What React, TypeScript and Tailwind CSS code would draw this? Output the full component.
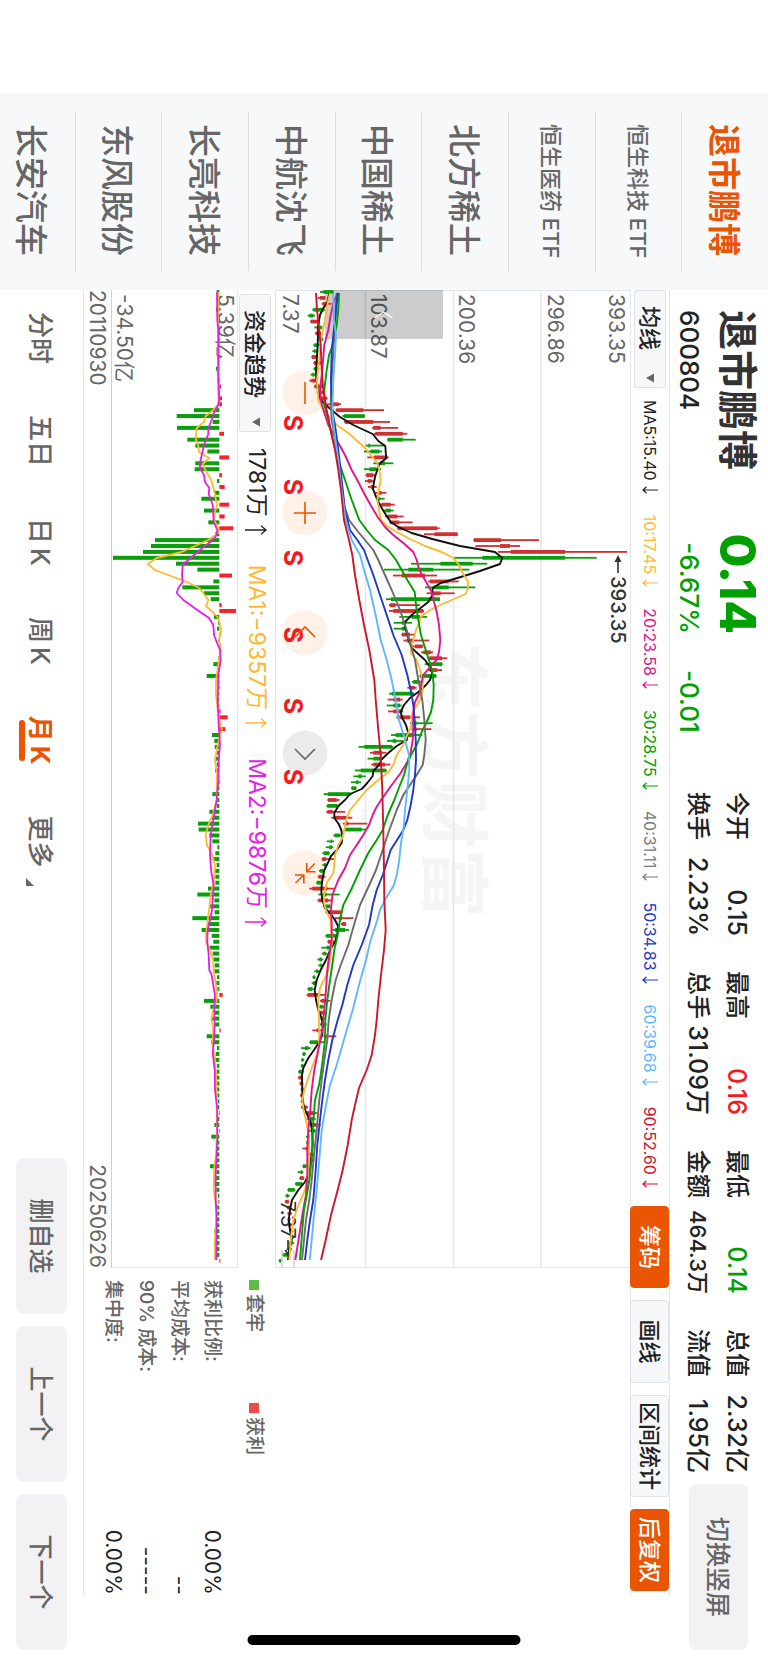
type Level = [number, number];

interface Line {
  color: string;
  points: Level[];
}

const FIRST_X = 292;
const STEP = 5.907;

const watchlist = [
  { name: "退市鹏博", active: true },
  { name: "恒生科技 ETF", small: true },
  { name: "恒生医药 ETF", small: true },
  { name: "北方稀土" },
  { name: "中国稀土" },
  { name: "中航沈飞" },
  { name: "长亮科技" },
  { name: "东风股份" },
  { name: "长安汽车" },
];

const stats = [
  [
    { label: "今开", value: "0.15" },
    { label: "换手", value: "2.23%" },
  ],
  [
    { label: "最高", value: "0.16", tone: "text-[#f5191e]" },
    { label: "总手", value: "31.09万" },
  ],
  [
    { label: "最低", value: "0.14", tone: "text-[#00a000]" },
    { label: "金额", value: "464.3万", small: true },
  ],
  [
    { label: "总值", value: "2.32亿" },
    { label: "流值", value: "1.95亿" },
  ],
];

const averages = [
  { text: "MA5:15.40", tone: "text-[#222222]" },
  { text: "10:17.45", tone: "text-[#fdb932]" },
  { text: "20:23.58", tone: "text-[#e5148c]" },
  { text: "30:28.75", tone: "text-[#00a000]" },
  { text: "40:31.11", tone: "text-[#7a7a7a]" },
  { text: "50:34.83", tone: "text-[#2038c8]" },
  { text: "60:39.68", tone: "text-[#5fb8fa]" },
  { text: "90:52.60", tone: "text-[#d0142c]" },
];

const costs = [
  { label: "获利比例:", value: "0.00%" },
  { label: "平均成本:", value: "--" },
  { label: "90% 成本:", value: "-----" },
  { label: "集中度:", value: "0.00%" },
];

// up(1)/down(0), low, body low, body high, high; three levels per drawn unit
const candles: [number, number, number, number, number][] = [
  [0, 150, 160, 190, 190], [1, 143, 150, 166, 166], [1, 155, 158, 172, 185], [0, 127, 130, 162, 165],
  [0, 113, 118, 130, 135], [1, 120, 122, 145, 145], [0, 133, 140, 155, 158], [1, 135, 137, 153, 153],
  [0, 145, 150, 158, 160], [0, 130, 133, 145, 150], [0, 127, 132, 137, 145], [1, 124, 126, 140, 140],
  [1, 130, 132, 152, 152], [0, 130, 133, 145, 148], [0, 122, 127, 133, 140], [1, 118, 124, 138, 138],
  [1, 132, 134, 158, 158], [1, 140, 144, 158, 160], [1, 150, 152, 170, 173], [1, 170, 188, 206, 213],
  [1, 197, 199, 280, 342], [0, 217, 222, 284, 284], [1, 222, 225, 310, 360], [1, 307, 309, 332, 384],
  [1, 312, 316, 398, 412], [0, 351, 353, 398, 437], [0, 287, 295, 300, 345], [0, 282, 302, 328, 336],
  [1, 292, 312, 352, 356], [0, 310, 330, 345, 370], [0, 282, 298, 320, 333], [1, 287, 289, 310, 315],
  [1, 285, 293, 305, 312], [1, 294, 302, 312, 320], [1, 315, 326, 334, 349], [0, 318, 325, 330, 344],
  [1, 330, 335, 362, 374], [0, 340, 347, 362, 371], [1, 345, 352, 382, 401], [1, 358, 360, 388, 428],
  [1, 381, 384, 501, 509], [1, 462, 493, 563, 563], [1, 610, 612, 693, 807], [1, 616, 690, 720, 750],
  [1, 684, 722, 885, 1071], [0, 553, 637, 885, 980], [0, 423, 511, 608, 652], [0, 342, 415, 490, 598],
  [1, 369, 395, 465, 501], [1, 474, 480, 536, 566], [0, 465, 490, 536, 616], [1, 470, 487, 512, 554],
  [0, 348, 363, 510, 510], [1, 357, 360, 376, 450], [1, 357, 370, 460, 462], [0, 388, 425, 450, 471],
  [0, 371, 395, 405, 426], [0, 371, 395, 403, 410], [1, 394, 396, 420, 435], [1, 400, 410, 430, 478],
  [1, 425, 435, 458, 460], [1, 453, 460, 482, 489], [1, 472, 478, 516, 532], [0, 464, 480, 516, 518],
  [1, 474, 480, 502, 516], [0, 448, 450, 498, 500], [0, 426, 430, 450, 455], [1, 412, 420, 434, 440],
  [0, 357, 365, 430, 432], [1, 353, 370, 390, 398], [0, 350, 370, 390, 395], [1, 354, 370, 395, 400],
  [1, 379, 382, 420, 450], [0, 420, 425, 440, 488], [1, 425, 430, 440, 484], [0, 363, 377, 426, 457],
  [0, 351, 368, 378, 400], [0, 266, 283, 366, 369], [1, 300, 310, 336, 349], [0, 293, 310, 335, 338],
  [1, 304, 310, 345, 361], [0, 255, 272, 348, 351], [0, 250, 265, 275, 287], [0, 243, 258, 265, 273],
  [0, 243, 245, 258, 260], [0, 161, 174, 241, 245], [1, 172, 174, 200, 209], [0, 169, 172, 202, 204],
  [1, 169, 172, 188, 225], [1, 184, 195, 230, 247], [1, 218, 225, 235, 292], [0, 222, 226, 275, 288],
  [0, 190, 194, 210, 215], [0, 170, 182, 186, 192], [0, 167, 178, 186, 190], [0, 157, 161, 177, 180],
  [1, 155, 157, 168, 192], [0, 157, 162, 168, 170], [0, 147, 150, 160, 163], [1, 143, 146, 160, 166],
  [0, 138, 141, 155, 158], [1, 118, 127, 172, 192], [0, 145, 160, 170, 209], [1, 142, 146, 175, 187],
  [0, 160, 165, 180, 185], [1, 166, 170, 213, 215], [1, 195, 208, 216, 250], [1, 213, 216, 228, 229],
  [0, 188, 195, 225, 237], [0, 166, 169, 198, 202], [1, 172, 174, 190, 195], [0, 154, 170, 180, 187],
  [0, 155, 160, 168, 172], [0, 142, 148, 156, 160], [0, 145, 149, 155, 160], [0, 133, 138, 145, 152],
  [0, 127, 130, 135, 137], [0, 125, 129, 138, 141], [0, 112, 115, 127, 131], [1, 110, 113, 146, 165],
  [1, 150, 154, 170, 181], [0, 145, 150, 160, 165], [1, 145, 150, 163, 170], [0, 150, 153, 160, 165],
  [0, 148, 152, 165, 170], [1, 127, 140, 148, 158], [1, 160, 166, 170, 199], [0, 118, 120, 145, 165],
  [0, 93, 105, 115, 122], [0, 97, 99, 105, 108], [0, 93, 95, 100, 103], [0, 92, 94, 100, 103],
  [0, 84, 87, 98, 100], [1, 84, 86, 96, 98], [1, 88, 90, 98, 100], [0, 92, 94, 100, 103],
  [1, 90, 92, 97, 100], [0, 92, 94, 99, 100], [1, 93, 95, 110, 114], [1, 105, 110, 135, 143],
  [0, 110, 118, 130, 137], [1, 118, 122, 140, 152], [0, 115, 125, 135, 142], [0, 108, 112, 118, 120],
  [0, 108, 110, 118, 120], [1, 97, 107, 112, 117], [1, 112, 115, 128, 132], [1, 120, 122, 130, 133],
  [0, 97, 99, 108, 112], [0, 83, 92, 97, 100], [1, 88, 90, 101, 103], [0, 75, 77, 97, 100],
  [0, 52, 54, 74, 76], [0, 46, 49, 55, 59], [1, 44, 46, 56, 58], [1, 50, 52, 60, 62],
  [1, 52, 56, 62, 66], [1, 52, 55, 60, 62], [1, 54, 56, 61, 64], [1, 58, 60, 66, 70],
  [0, 60, 64, 70, 73], [0, 55, 58, 68, 72], [0, 50, 54, 62, 66], [0, 38, 40, 52, 54],
  [0, 26, 28, 33, 34],
];

const priceLines: Line[] = [
  {
    color: "#111111",
    points: [
      [293, 178], [303, 172], [308, 160], [315, 150], [325, 145], [345, 143], [360, 140], [375, 138], [392, 145],
      [400, 152], [408, 178], [417, 210], [425, 250], [434, 308], [441, 325], [446, 346], [452, 347], [458, 349],
      [464, 328], [470, 322], [476, 316], [482, 312], [489, 309], [495, 316], [501, 324], [508, 335], [515, 348],
      [522, 362], [527, 385], [533, 425], [539, 487], [546, 570], [552, 675], [558, 697], [564, 690], [571, 630],
      [577, 572], [583, 512], [588, 488], [596, 486], [602, 475], [609, 448], [615, 425], [622, 405], [628, 405],
      [635, 413], [642, 418], [648, 425], [654, 445], [660, 465], [666, 478], [673, 487], [680, 480], [685, 468],
      [692, 445], [698, 420], [705, 402], [712, 392], [718, 397], [725, 408], [732, 414], [740, 410], [746, 380],
      [753, 355], [760, 333], [764, 330], [771, 310], [776, 308], [783, 292], [789, 275], [794, 240], [800, 225],
      [806, 205], [813, 193], [818, 193], [824, 206], [830, 214], [836, 217], [843, 215], [850, 200], [856, 183],
      [862, 175], [870, 163], [878, 158], [885, 155], [892, 154], [900, 157], [908, 165], [914, 182], [920, 195],
      [926, 204], [934, 202], [942, 195], [950, 180], [960, 168], [970, 152], [980, 140], [990, 134], [1000, 138],
      [1010, 145], [1018, 155], [1026, 158], [1035, 157], [1042, 148], [1050, 132], [1058, 115], [1068, 100],
      [1075, 96], [1090, 97], [1100, 98], [1107, 102], [1115, 112], [1122, 122], [1132, 127], [1145, 128],
      [1155, 125], [1165, 120], [1175, 115], [1182, 105], [1190, 85], [1200, 66], [1210, 60], [1220, 56],
      [1230, 60], [1240, 65], [1250, 58], [1260, 54],
    ],
  },
  {
    color: "#fdb932",
    points: [
      [293, 180], [305, 172], [320, 165], [340, 152], [360, 147], [380, 141], [400, 145], [410, 160], [416, 175],
      [425, 200], [433, 235], [441, 262], [448, 285], [456, 305], [463, 322], [472, 329], [480, 332], [490, 326],
      [500, 322], [510, 327], [520, 332], [526, 350], [532, 380], [539, 420], [546, 465], [552, 515], [558, 550],
      [564, 565], [571, 575], [577, 585], [582, 595], [588, 594], [594, 587], [600, 545], [605, 510], [610, 480],
      [617, 452], [623, 448], [630, 438], [638, 432], [645, 425], [653, 422], [660, 440], [670, 450], [680, 458],
      [690, 458], [700, 450], [708, 436], [716, 425], [725, 425], [735, 412], [745, 400], [755, 380], [765, 370],
      [772, 355], [780, 325], [790, 290], [800, 265], [810, 240], [820, 228], [828, 224], [837, 218], [845, 205],
      [855, 195], [865, 193], [873, 190], [882, 172], [892, 163], [903, 162], [912, 170], [920, 182], [930, 183],
      [940, 187], [950, 183], [960, 180], [970, 176], [978, 165], [988, 150], [1000, 145], [1020, 147],
      [1033, 148], [1045, 147], [1055, 140], [1068, 125], [1080, 113], [1090, 103], [1100, 97], [1110, 101],
      [1122, 109], [1135, 116], [1155, 118], [1175, 115], [1190, 105], [1200, 92], [1210, 80], [1220, 70],
      [1235, 64], [1250, 60], [1260, 58],
    ],
  },
  {
    color: "#e5148c",
    points: [
      [293, 205], [300, 193], [315, 182], [330, 175], [345, 163], [370, 157], [390, 150], [400, 152], [413, 163],
      [425, 175], [440, 200], [455, 225], [470, 245], [482, 265], [495, 285], [507, 305], [517, 323], [527, 345],
      [535, 370], [543, 400], [552, 430], [560, 440], [570, 448], [580, 465], [592, 485], [603, 493], [612, 500],
      [625, 507], [640, 511], [652, 507], [660, 500], [667, 480], [675, 460], [685, 453], [692, 450], [702, 435],
      [712, 430], [725, 430], [740, 428], [752, 422], [762, 412], [773, 392], [785, 365], [800, 333], [808, 318],
      [815, 308], [825, 297], [835, 280], [845, 260], [855, 240], [868, 225], [880, 205], [895, 187], [910, 183],
      [925, 185], [940, 185], [950, 180], [970, 172], [990, 168], [1010, 163], [1030, 157], [1050, 145],
      [1070, 133], [1090, 125], [1110, 121], [1130, 115], [1150, 112], [1175, 112], [1195, 108], [1215, 97],
      [1235, 88], [1260, 76],
    ],
  },
  {
    color: "#00a000",
    points: [
      [293, 207], [310, 205], [325, 200], [345, 188], [355, 177], [370, 170], [390, 163], [405, 163], [420, 175],
      [440, 188], [460, 205], [480, 225], [500, 245], [520, 268], [530, 290], [540, 315], [550, 355], [560, 378],
      [570, 395], [580, 412], [592, 434], [605, 438], [620, 445], [635, 453], [650, 467], [660, 477], [672, 487],
      [685, 491], [700, 490], [712, 483], [722, 470], [732, 455], [745, 440], [755, 423], [765, 410], [775, 402],
      [785, 390], [800, 373], [815, 353], [830, 338], [840, 320], [853, 295], [870, 270], [890, 243], [905, 220],
      [920, 210], [935, 203], [950, 193], [965, 187], [985, 178], [1000, 172], [1020, 166], [1040, 165],
      [1060, 158], [1075, 152], [1085, 147], [1100, 135], [1130, 128], [1155, 126], [1175, 120], [1190, 113],
      [1210, 102], [1230, 97], [1260, 90],
    ],
  },
  {
    color: "#6b6b6b",
    points: [
      [293, 200], [340, 192], [390, 183], [405, 182], [420, 185], [450, 200], [480, 213], [505, 222], [520, 237],
      [532, 265], [540, 285], [550, 310], [560, 325], [570, 338], [590, 365], [610, 390], [630, 410], [645, 422],
      [660, 435], [680, 445], [700, 457], [720, 463], [740, 467], [755, 463], [765, 458], [775, 440], [785, 420],
      [795, 400], [810, 380], [830, 358], [850, 338], [870, 318], [885, 298], [905, 270], [925, 252], [945, 235],
      [965, 212], [980, 197], [1000, 185], [1020, 176], [1040, 172], [1060, 163], [1080, 155], [1100, 148],
      [1130, 140], [1155, 132], [1180, 125], [1200, 118], [1220, 108], [1260, 96],
    ],
  },
  {
    color: "#2038c8",
    points: [
      [293, 203], [320, 195], [350, 185], [380, 183], [410, 187], [430, 197], [450, 205], [480, 215], [510, 225],
      [530, 240], [540, 262], [550, 282], [560, 293], [575, 310], [595, 330], [615, 350], [635, 370], [655, 395],
      [675, 412], [690, 422], [705, 430], [720, 434], [740, 437], [760, 438], [775, 435], [790, 430], [805, 422],
      [820, 412], [830, 400], [838, 385], [850, 362], [865, 348], [875, 338], [890, 320], [905, 308], [925, 297],
      [945, 275], [965, 250], [985, 232], [1005, 217], [1020, 203], [1040, 187], [1060, 175], [1080, 165],
      [1100, 157], [1120, 150], [1145, 142], [1170, 137], [1200, 130], [1220, 120], [1240, 112], [1260, 105],
    ],
  },
  {
    color: "#5fb8fa",
    points: [
      [293, 190], [320, 192], [335, 198], [355, 195], [380, 190], [410, 187], [430, 192], [460, 205], [490, 215],
      [520, 227], [540, 245], [555, 270], [570, 282], [590, 300], [620, 320], [640, 332], [660, 350], [680, 365],
      [700, 377], [720, 387], [740, 405], [755, 417], [770, 418], [790, 412], [810, 405], [825, 402], [845, 392],
      [860, 388], [875, 380], [885, 372], [900, 345], [910, 330], [920, 322], [940, 302], [960, 288], [985, 267],
      [1010, 248], [1030, 230], [1050, 213], [1065, 200], [1085, 180], [1105, 168], [1130, 155], [1160, 148],
      [1190, 140], [1215, 132], [1240, 125], [1260, 119],
    ],
  },
  {
    color: "#d0142c",
    points: [
      [293, 138], [310, 141], [325, 146], [345, 152], [370, 155], [390, 160], [410, 170], [430, 182], [450, 195],
      [470, 205], [490, 213], [520, 222], [540, 237], [555, 247], [575, 255], [600, 268], [625, 282], [650, 298],
      [680, 313], [700, 317], [730, 325], [755, 332], [790, 337], [830, 340], [870, 342], [900, 343], [930, 347],
      [950, 342], [975, 333], [1000, 325], [1020, 320], [1035, 315], [1055, 305], [1070, 290], [1088, 267],
      [1105, 255], [1120, 245], [1145, 233], [1170, 218], [1190, 203], [1215, 183], [1240, 167], [1260, 153],
    ],
  },
];

const FLOW_ZERO = 658;
const flows = [
  650, 656, 660, 648, 655, 660, 654, 655, 660, 653, 655, 661, 655, 648, 655, 660, 663, 655, 666, 666,
  582, 530, 638, 531, 672, 562, 586, 622, 687, 586, 584, 666, 651, 674, 643, 604, 687, 612, 674, 625,
  700, 646, 465, 453, 429, 339, 528, 592, 696, 640, 547, 612, 632, 665, 708, 642, 654, 651, 663, 655,
  663, 660, 655, 640, 655, 620, 653, 660, 655, 655, 656, 662, 683, 655, 676, 636, 643, 644, 650, 645,
  650, 645, 652, 660, 653, 637, 651, 651, 628, 634, 594, 596, 628, 637, 652, 646, 638, 650, 644, 646,
  646, 624, 592, 643, 630, 644, 577, 624, 605, 635, 640, 628, 638, 640, 644, 640, 651, 645, 651, 668,
  612, 631, 645, 633, 643, 662, 620, 634, 651, 647, 645, 651, 650, 646, 651, 650, 652, 653, 652, 660,
  652, 643, 660, 634, 651, 651, 651, 651, 630, 650, 645, 643, 649, 654, 655, 648, 650, 651, 650, 643,
  650, 642, 650, 651, 661,
];

const flowLines: Line[] = [
  {
    color: "#fdb932",
    points: [
      [292, 655], [350, 654], [404, 655], [410, 640], [416, 617], [422, 612], [428, 590], [434, 589], [440, 588],
      [446, 595], [452, 597], [458, 628], [464, 608], [470, 616], [480, 634], [490, 642], [500, 648], [505, 651],
      [512, 645], [520, 642], [528, 655], [533, 655], [540, 625], [546, 585], [552, 545], [558, 470], [564, 443],
      [570, 465], [576, 513], [582, 560], [588, 598], [594, 612], [600, 625], [606, 618], [612, 638], [618, 655],
      [630, 664], [640, 657], [650, 662], [665, 655], [680, 648], [695, 648], [710, 653], [722, 660], [730, 666],
      [740, 657], [750, 650], [760, 645], [775, 651], [800, 650], [815, 638], [825, 625], [835, 617], [845, 621],
      [855, 637], [865, 645], [880, 642], [895, 632], [905, 629], [920, 623], [935, 618], [942, 618], [950, 630],
      [960, 639], [975, 643], [990, 651], [1000, 650], [1010, 640], [1020, 634], [1028, 640], [1045, 638],
      [1060, 645], [1080, 649], [1100, 650], [1130, 651], [1155, 648], [1168, 643], [1190, 641], [1210, 650],
      [1240, 645], [1260, 645],
    ],
  },
  {
    color: "#e61ee6",
    points: [
      [292, 651], [320, 652], [330, 655], [380, 655], [400, 658], [405, 655], [412, 643], [420, 635], [428, 625],
      [434, 625], [445, 612], [455, 605], [463, 600], [468, 600], [475, 612], [482, 615], [488, 628], [494, 626],
      [505, 638], [515, 640], [522, 641], [530, 652], [535, 650], [540, 638], [550, 600], [560, 565], [565, 548],
      [575, 546], [582, 548], [588, 535], [593, 530], [600, 550], [610, 592], [618, 627], [625, 640], [635, 642],
      [642, 650], [650, 660], [660, 662], [675, 655], [700, 653], [725, 656], [745, 660], [760, 656], [780, 655],
      [800, 650], [820, 640], [835, 632], [855, 630], [872, 634], [885, 641], [900, 638], [910, 636], [920, 630],
      [930, 623], [942, 622], [955, 626], [970, 628], [975, 635], [985, 640], [995, 645], [1010, 643],
      [1025, 644], [1040, 642], [1053, 638], [1070, 644], [1090, 645], [1110, 652], [1140, 652], [1175, 647],
      [1200, 647], [1220, 650], [1260, 649],
    ],
  },
];

const priceY = (level: number) => 498 - level / 3;
const flowY = (level: number) => 768 - level / 3;

const toPoints = (points: Level[], scale: (level: number) => number) =>
  points.map(([x, level]) => `${x},${scale(level).toFixed(1)}`).join(" ");

const axis = [
  { text: "393.35", y: 159 },
  { text: "296.86", y: 220 },
  { text: "200.36", y: 309 },
  { text: "103.87", y: 397 },
  { text: "7.37", y: 485 },
];

function PriceChart() {
  return (
    <svg viewBox="290 138 978 354" className="block w-full" role="img" aria-label="月K">
      <text x="642" y="339" fill="#f5f5f5" fontSize="69" fontWeight="700">
        东方财富
      </text>
      <g stroke="#e3e6ee" strokeWidth="1.5">
        <path d="M290 227H1268M290 314.5H1268M290 402.5H1268" />
        <path d="M290.5 138V492M1267.5 138V492" strokeWidth="1" />
        <path d="M1250 474H1268M1250 486H1268" stroke="#d0d0d0" />
      </g>
      <g fill="#666666" fontSize="21">
        {axis.map((a) => (
          <text key={a.text} x="294" y={a.y}>
            {a.text}
          </text>
        ))}
      </g>
      <path d="M290 325H337a2 2 0 0 1 2 2V443H290Z" fill="#000000" fillOpacity="0.2" />
      <path d="M318 375.5L312 384.5L318 393.5" fill="none" stroke="#ffffff" strokeWidth="1.3" />

      {[393, 513, 633, 753, 873].map((x) => (
        <circle key={x} cx={x} cy="463" r="22.5" fill={x === 753 ? "#ebebeb" : "#fff0e8"} />
      ))}

      {candles.map(([up, low, bodyLow, bodyHigh, high], i) => {
        const x = FIRST_X + i * STEP;
        return (
          <g key={i} fill={up ? "#d03030" : "#0a9f0a"}>
            <rect x={x - 0.9} y={priceY(high)} width="1.8" height={(high - low) / 3} />
            <rect x={x - 1.9} y={priceY(bodyHigh)} width="3.8" height={(bodyHigh - bodyLow) / 3} />
          </g>
        );
      })}

      <g fill="#333333" fontSize="20">
        <text x="576" y="157" fontWeight="500">393.35</text>
        <text x="1201" y="487">7.37</text>
        <path d="M555 150L562 146.500V153.500ZM560 149.200H573V150.800H560Z" />
        <path d="M1240 479.200H1252V480.800H1240ZM1257 480L1250 476.500V483.500Z" />
      </g>

      <g fill="none" strokeWidth="1.9" strokeLinejoin="round">
        {priceLines.map((line) => (
          <polyline key={line.color} points={toPoints(line.points, priceY)} stroke={line.color} />
        ))}
      </g>

      <g fill="#f5191e" fontSize="25" fontWeight="700" textAnchor="middle">
        {[423, 487, 558, 635, 706, 777].map((x) => (
          <text key={x} x={x} y="484">
            S
          </text>
        ))}
      </g>
      <g fill="none" stroke="#ea5504" strokeWidth="1.6">
        <path d="M382 463H404M502 463H524M513 452V474" />
        <path d="M637 453L627 463L637 473" />
        <path d="M749 453L759 463L749 473" stroke="#666666" />
        <path d="M863 461.300H871.700V452.700M871.700 461.300L863.500 453.200M883.500 464.200H875V473M875 464.200L883 472.500" />
      </g>
    </svg>
  );
}

function FlowChart() {
  return (
    <svg viewBox="290 530 978 126" className="block w-full" role="img" aria-label="资金趋势">
      <path d="M290 530.500H1268M1267.500 530V656" stroke="#e3e6ee" fill="none" />
      {flows.map((level, i) => {
        const top = Math.max(level, FLOW_ZERO);
        const bottom = Math.min(level, FLOW_ZERO);
        return (
          <rect
            key={i}
            x={FIRST_X + i * STEP - 2}
            y={flowY(top)}
            width="4"
            height={(top - bottom) / 3}
            fill={level > FLOW_ZERO ? "#f5232b" : "#0a9f0a"}
          />
        );
      })}
      <g fill="#666666" fontSize="21">
        <text x="294" y="550">5.39亿</text>
        <text x="294" y="651">-34.50亿</text>
      </g>
      <g fill="none" strokeWidth="1.8" strokeLinejoin="round">
        {flowLines.map((line) => (
          <polyline key={line.color} points={toPoints(line.points, flowY)} stroke={line.color} />
        ))}
      </g>
    </svg>
  );
}

function Picker({ label, width }: { label: string; width: string }) {
  return (
    <div className={`relative h-8 ${width}`}>
      <select
        aria-label={label}
        className="h-full w-full appearance-none rounded-[3px] border border-[#dfe2e8] bg-[#f7f8fa] pl-[15px] text-[22px] font-medium leading-7 text-[#222222]"
      >
        <option>{label}</option>
      </select>
      <svg viewBox="0 0 10 8" className="pointer-events-none absolute right-[5px] top-3 h-2 w-[10px]">
        <path d="M0.500 0H9.500L5 8Z" fill="#666666" />
      </svg>
    </div>
  );
}

function FallArrow() {
  return (
    <svg viewBox="0 0 8 16" className="ml-[5px] h-4 w-2" fill="none" stroke="currentColor" strokeWidth="1.2">
      <path d="M4 0V15M0.800 11.500L4 15L7.200 11.500" />
    </svg>
  );
}

function RiseArrow() {
  return (
    <svg viewBox="0 0 10 22" className="ml-2 h-[22px] w-[10px]" fill="none" stroke="currentColor" strokeWidth="1.4">
      <path d="M5 22V1M0.800 6L5 1L9.200 6" />
    </svg>
  );
}

function Header() {
  return (
    <header className="flex h-[98px] items-start pl-5 pr-[13px]">
      <div className="grid grid-cols-[160px_164px_auto] gap-y-3 pt-[11px] text-[26px] font-medium leading-8 text-[#00a000]">
        <h1 className="text-[40px] font-bold leading-10 text-[#333333]">退市鹏博</h1>
        <strong className="text-right text-[49px] font-extrabold leading-10">0.14</strong>
        <span />
        <span className="text-[#222222]">600804</span>
        <span className="text-right">-6.67%</span>
        <span className="pl-9">-0.01</span>
      </div>
      <div className="ml-auto mr-[11px] flex gap-[35px] pt-[13px]">
        {stats.map((column) => (
          <dl key={column[0].label} className="flex w-[144px] flex-col gap-[3px] font-medium text-[#222222]">
            {column.map((s) => (
              <div key={s.label} className="flex items-center justify-between whitespace-nowrap leading-9">
                <dt className="text-[24px]">{s.label}</dt>
                <dd className={`${s.small ? "text-[22px]" : "text-[25px]"} ${s.tone ?? ""}`}>{s.value}</dd>
              </div>
            ))}
          </dl>
        ))}
      </div>
      <button type="button" className="mt-5 h-[59px] w-[166px] rounded-lg bg-[#f2f2f5] pt-0.5 text-[25px] font-medium text-[#666666]">
        切换竖屏
      </button>
    </header>
  );
}

function Toolbar() {
  const solid = "bg-[#ea5504] border-[#ea5504] text-white";
  const plain = "bg-[#f7f8fa] border-[#dfe2e8] text-[#222222]";
  const button = "h-[39px] rounded-[4px] border text-[22px] font-medium";
  return (
    <div className="flex h-10 items-center border-y border-[#e3e6ee] pr-1">
      <Picker label="均线" width="w-[98px]" />
      <ul className="ml-3 flex gap-[21px] whitespace-nowrap text-[16px]">
        {averages.map((a) => (
          <li key={a.text} className={`flex items-center ${a.tone}`}>
            {a.text}
            <FallArrow />
          </li>
        ))}
      </ul>
      <div className="ml-auto flex gap-3">
        <button type="button" className={`${button} ${solid} w-[82px]`}>筹码</button>
        <button type="button" className={`${button} ${plain} w-[83px]`}>画线</button>
        <button type="button" className={`${button} ${plain} w-[102px]`}>区间统计</button>
        <button type="button" className={`${button} ${solid} w-[82px]`}>后复权</button>
      </div>
    </div>
  );
}

function CostPanel() {
  return (
    <section className="flex w-[327px] flex-col justify-end pb-[13px] pl-3 text-[19px] font-medium text-[#666666]">
      <div className="mb-[11px] flex leading-7">
        <span className="flex w-[123px] items-center gap-1">
          <i className="size-[10px] bg-[#5abe46]" />
          套牢
        </span>
        <span className="flex items-center gap-1">
          <i className="size-[10px] bg-[#eb4b4b]" />
          获利
        </span>
      </div>
      <dl>
        {costs.map((c) => (
          <div key={c.label} className="flex justify-between leading-[33px]">
            <dt>{c.label}</dt>
            <dd className="text-[21px] font-normal text-[#222222]">{c.value}</dd>
          </div>
        ))}
      </dl>
    </section>
  );
}

function Footer() {
  const action = "h-[51px] w-[156px] rounded-lg bg-[#f2f2f5] pt-0.5 text-[25px]";
  return (
    <footer className="flex flex-1 items-center pl-[22px] pr-[13px] text-[26px] font-medium text-[#666666]">
      <nav className="flex gap-[51px] pt-0.5">
        <button type="button">分时</button>
        <button type="button">五日</button>
        <button type="button" className="flex gap-1">
          日<span>K</span>
        </button>
        <button type="button" className="flex gap-1">
          周<span>K</span>
        </button>
        <button type="button" className="relative flex gap-1 font-bold text-[#ea5504]">
          月<span>K</span>
          <i className="absolute inset-x-1 bottom-[-2px] h-[6px] rounded-full bg-[#ea5504]" />
        </button>
        <button type="button" className="flex items-center gap-[10px]">
          更多
          <svg viewBox="0 0 8 8" className="mt-5 size-2">
            <path d="M8 0V8H0Z" fill="#666666" />
          </svg>
        </button>
      </nav>
      <div className="ml-auto flex gap-3">
        <button type="button" className={action}>删自选</button>
        <button type="button" className={action}>上一个</button>
        <button type="button" className={action}>下一个</button>
      </div>
    </footer>
  );
}

export default function App() {
  return (
    <div className="h-screen w-screen overflow-hidden bg-white">
      <div className="relative flex h-[100vw] w-[100vh] origin-top-left translate-x-[100vw] rotate-90 overflow-hidden bg-white font-['Inter','Noto_Sans_CJK_SC',sans-serif]">
        <aside className="ml-[93px] flex w-[197px] shrink-0 flex-col bg-[#f7f8fa] px-[19px]">
          <ul className="-mb-3 grid flex-1 grid-rows-9">
            {watchlist.map((w) => (
              <li key={w.name} className="flex border-b border-[#dddfe3]">
                <a
                  href="#"
                  className={`flex flex-1 items-center whitespace-nowrap pl-3 ${
                    w.small ? "pt-0.5 text-[22px]" : "pt-1 text-[33px]"
                  } ${w.active ? "font-bold text-[#ea5504]" : "font-medium text-[#666666]"}`}
                >
                  {w.name}
                </a>
              </li>
            ))}
          </ul>
        </aside>

        <main className="flex min-w-0 flex-1 flex-col">
          <Header />
          <div className="mr-[68px] border-b border-[#e8e8ec]">
            <Toolbar />
            <div className="flex">
              <div className="min-w-0 flex-1">
                <PriceChart />
                <div className="flex h-[38px] items-center whitespace-nowrap border-t border-[#e3e6ee] pl-1 text-[23px]">
                  <Picker label="资金趋势" width="w-[138px]" />
                  <span className="ml-4 flex items-center text-[#222222]">
                    1781万
                    <RiseArrow />
                  </span>
                  <span className="ml-[30px] flex items-center text-[#fdb932]">
                    MA1:−9357万
                    <RiseArrow />
                  </span>
                  <span className="ml-[30px] flex items-center text-[#e61ee6]">
                    MA2:−9876万
                    <RiseArrow />
                  </span>
                </div>
                <FlowChart />
                <div className="flex h-[28px] items-center justify-between border-t border-[#cfcfcf] text-[21px] text-[#666666]">
                  <time>20110930</time>
                  <time>20250626</time>
                </div>
              </div>
              <CostPanel />
            </div>
          </div>
          <Footer />
        </main>

        <i className="absolute right-[18px] top-1/2 h-[273px] w-[10px] -translate-y-1/2 rounded-full bg-black" />
      </div>
    </div>
  );
}
